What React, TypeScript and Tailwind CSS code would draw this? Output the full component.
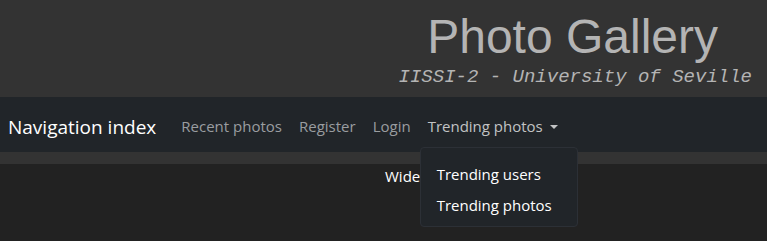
export default function App() {
  return (
    <div className="min-h-screen bg-[#222222] font-['Open_Sans',sans-serif] text-[15px] text-white">
      {/* Header */}
      <header className="h-[97px] bg-[#333333] flex flex-col items-end">
        <h1 className="mr-[49px] mt-[9px] font-['Liberation_Sans',Arial,sans-serif] text-[48px] leading-[56px] text-[#b4b4b4]">
          Photo Gallery
        </h1>
        <p className="mr-[15px] font-['Liberation_Mono','Courier_New',monospace] italic text-[19px] leading-[24px] text-[#b4b4b4]">
          IISSI-2 - University of Seville
        </p>
      </header>

      {/* Navbar */}
      <nav className="h-[55px] bg-[#212529] flex items-center px-2 pt-1">
        <span className="text-[19px] leading-[30px] mr-[17px] text-white">Navigation index</span>
        <ul className="flex items-center">
          <li><a className="block px-2 py-2 text-[#9a9da0]">Recent photos</a></li>
          <li className="ml-px"><a className="block px-2 py-2 text-[#9a9da0]">Register</a></li>
          <li className="ml-px"><a className="block px-2 py-2 text-[#9a9da0]">Login</a></li>
          <li className="relative ml-px">
            <a className="flex items-center px-2 py-2 text-[#c2c3c4]">
              Trending photos
              <span className="ml-[7px] inline-block w-0 h-0 border-x-[4px] border-x-transparent border-t-[4.5px] border-t-[#c2c3c4]" />
            </a>
            <div className="absolute left-0 top-[40px] z-10 w-[158px] rounded border border-[#2c3036] bg-[#212529] pt-[11px] pb-[5px]">
              <a className="block px-4 leading-[31px] text-white whitespace-nowrap">Trending users</a>
              <a className="block px-4 leading-[31px] text-white whitespace-nowrap">Trending photos</a>
            </div>
          </li>
        </ul>
      </nav>

      {/* Stripe */}
      <div className="h-[12px] bg-[#333333]" />

      {/* Main */}
      <main className="pl-[385px] pt-[1px]">
        <p className="leading-[22px]">Wide</p>
      </main>
    </div>
  );
}
